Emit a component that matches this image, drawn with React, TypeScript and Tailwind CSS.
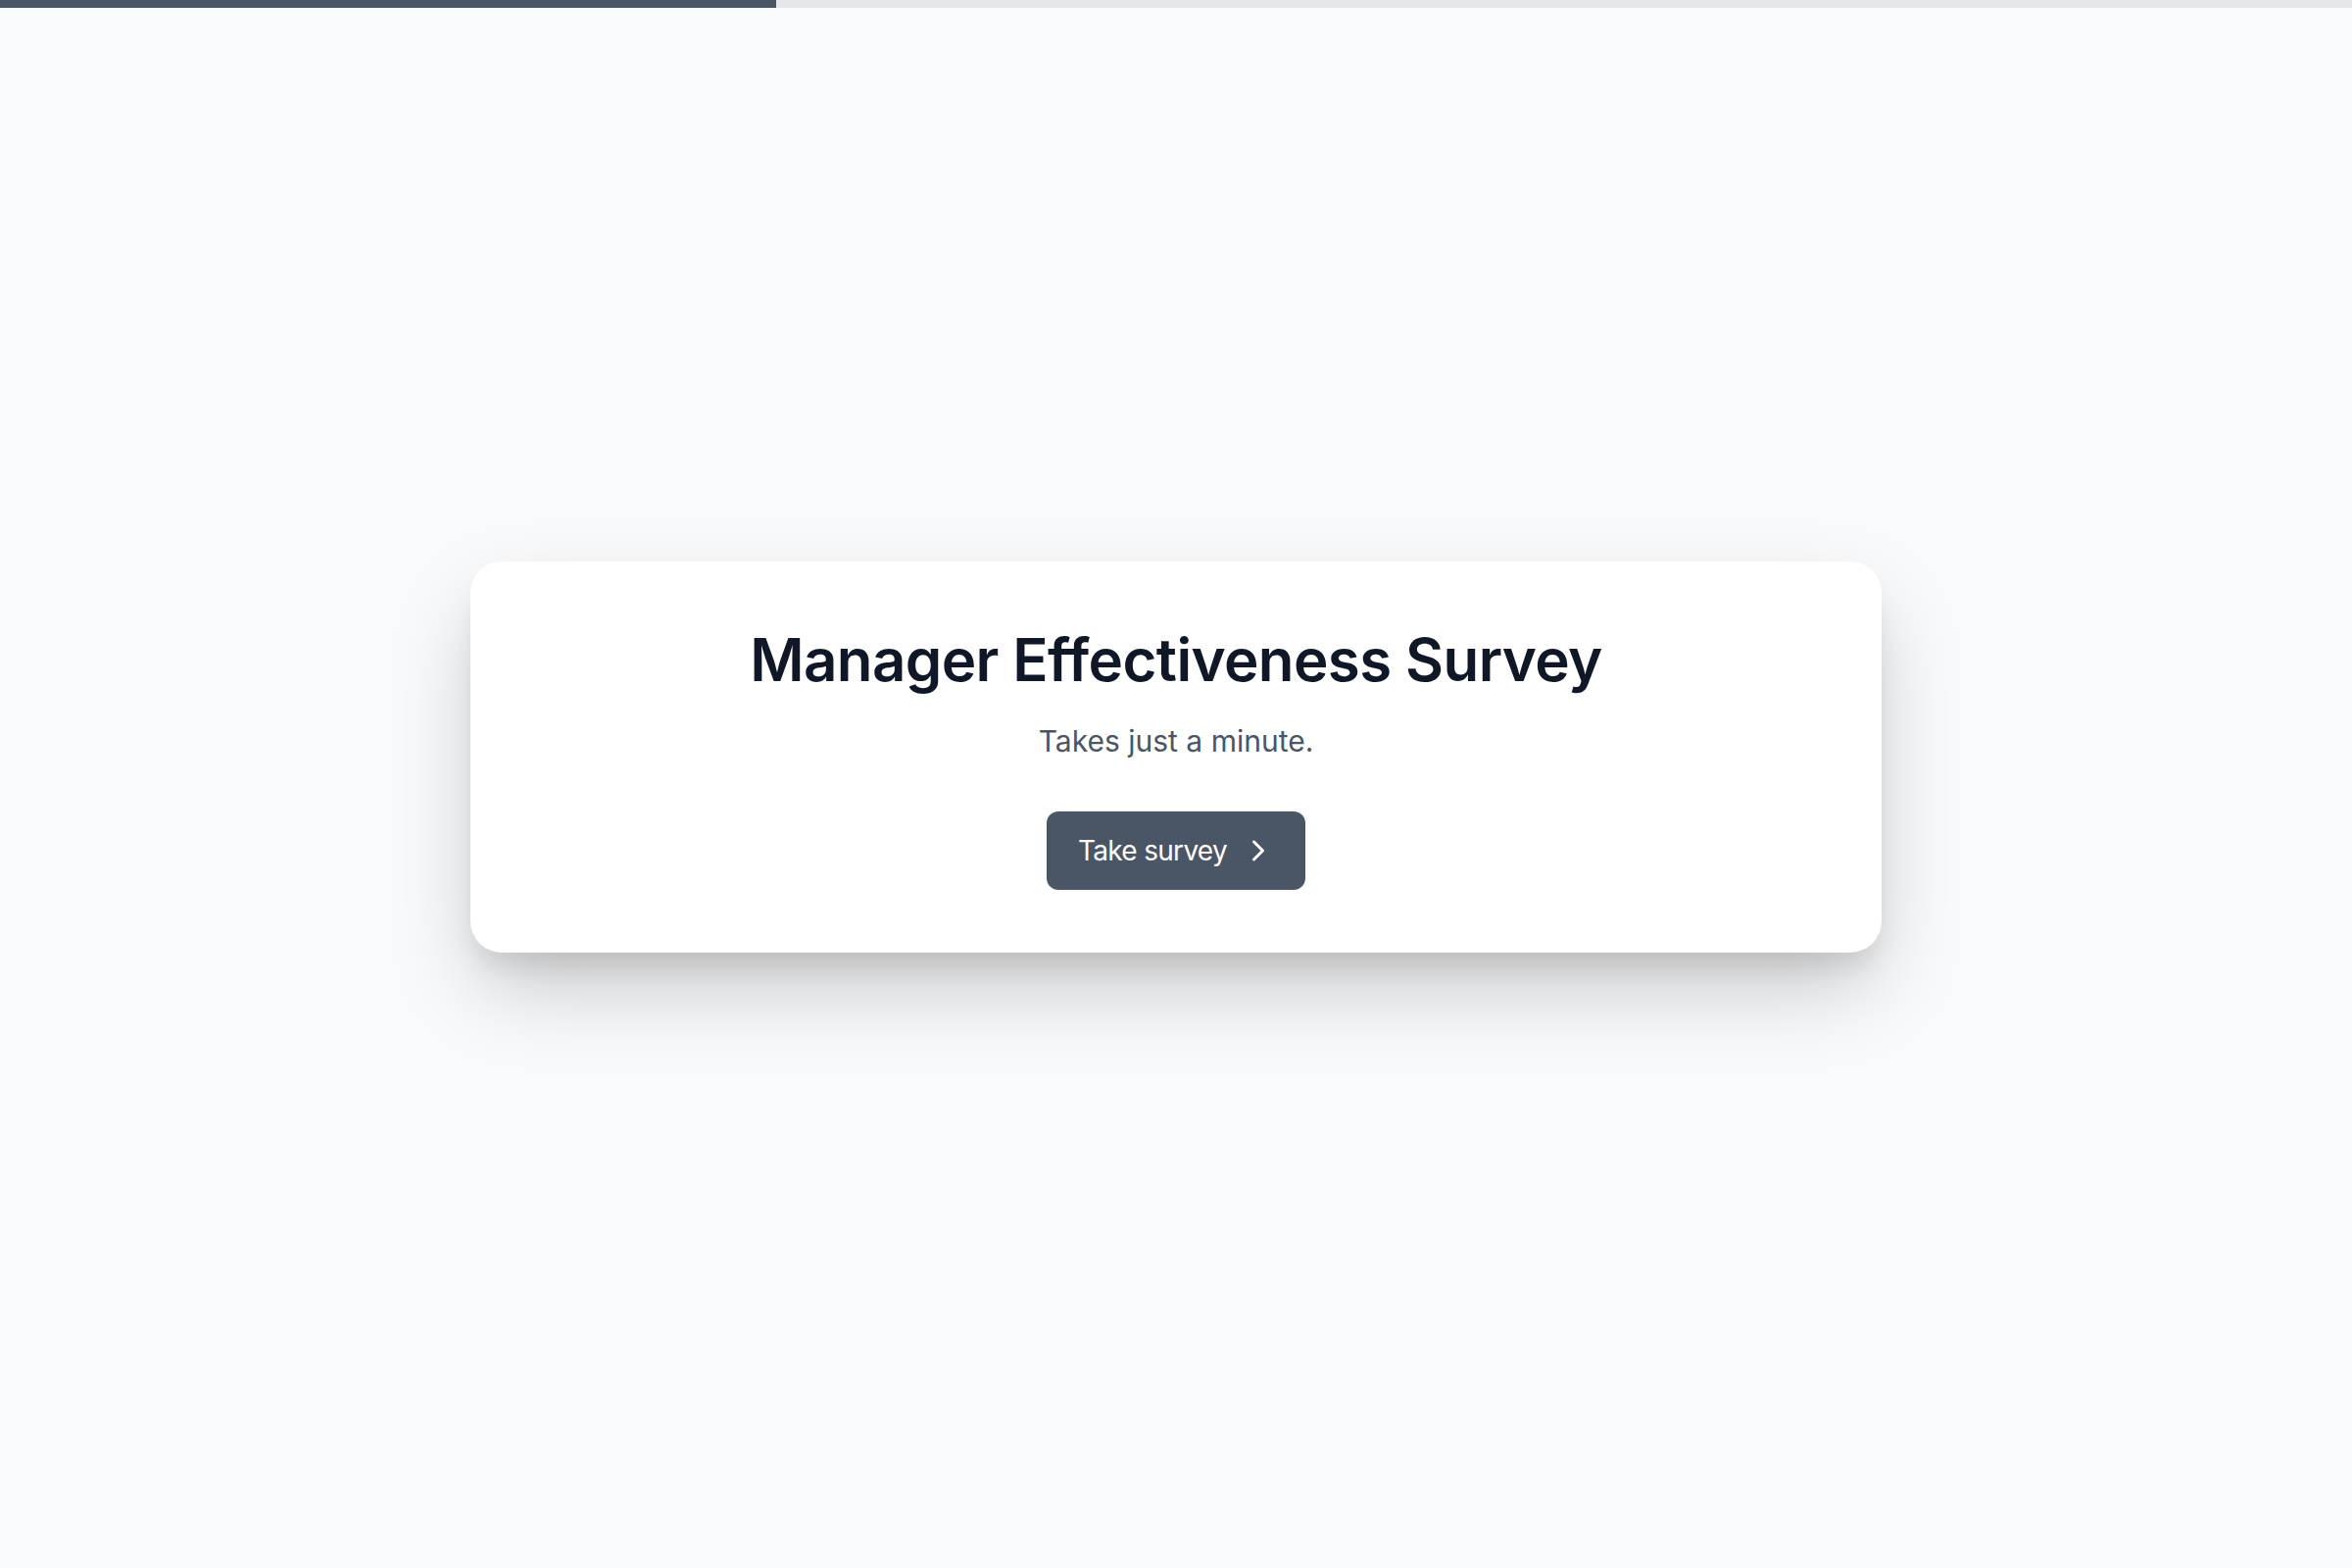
import React from "react";
import { ChevronRight } from "lucide-react";

export default function App() {
  return (
    <div className="min-h-screen flex flex-col bg-gray-50" style={{ fontFamily: "Inter, 'Noto Sans', sans-serif" }}>
      <div className="h-2 w-full bg-gray-200">
        <div className="h-full w-[33%] bg-gray-600" />
      </div>
      <main className="flex-1 flex items-center justify-center pb-16">
        <div className="w-[1440px] rounded-[32px] bg-white pt-[70px] pb-16 flex flex-col items-center shadow-[0_20px_25px_-5px_rgba(0,0,0,0.08),0_40px_90px_-10px_rgba(0,0,0,0.22)]">
          <h1 className="text-6xl font-semibold text-gray-900 tracking-[-0.01em]">Manager Effectiveness Survey</h1>
          <p className="mt-[35px] text-3xl text-gray-600">Takes just a minute.</p>
          <button className="mt-[54px] flex items-center gap-3 rounded-xl bg-gray-600 px-8 py-[22px] text-[28px] leading-9 text-white tracking-tight">
            <span>Take survey</span>
            <ChevronRight size={36} strokeWidth={2} className="translate-x-[2px]" />
          </button>
        </div>
      </main>
    </div>
  );
}
